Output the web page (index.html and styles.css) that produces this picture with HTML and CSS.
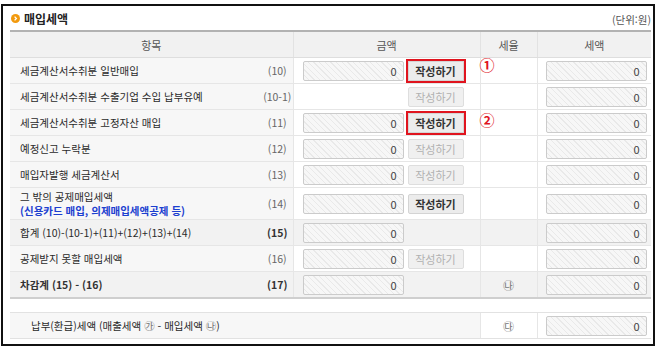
FILE: index.html
```html
<!DOCTYPE html>
<html lang="ko">
<head>
  <meta charset="UTF-8">
  <title>매입세액</title>
  <link rel="stylesheet" href="styles.css">
</head>
<body>
  <div class="panel">
    <div class="title-bar">
      <h2 class="title">
        <svg class="bullet" width="9" height="9" viewBox="0 0 9 9">
          <circle cx="4.5" cy="4.5" r="4.5" fill="#f29a0e"/>
          <path d="M3.6 2.6 L5.4 4.5 L3.6 6.4" stroke="#fff" stroke-width="1.3" fill="none"/>
        </svg>
        매입세액
      </h2>
      <span class="unit">(단위:원)</span>
    </div>

    <table class="tax-table">
      <colgroup>
        <col class="c-label"><col class="c-no"><col class="c-amount"><col class="c-rate"><col class="c-tax">
      </colgroup>
      <thead>
        <tr>
          <th colspan="2">항목</th>
          <th>금액</th>
          <th>세율</th>
          <th>세액</th>
        </tr>
      </thead>
      <tbody>
        <tr>
          <td class="label">세금계산서수취분 일반매입</td>
          <td class="no">(10)</td>
          <td class="amount">
            <div class="amount-box">
              <span class="field">0</span>
              <button class="write marked">작성하기</button>
            </div>
            <span class="mark mark-1">①</span>
          </td>
          <td class="rate"></td>
          <td class="tax"><span class="field">0</span></td>
        </tr>
        <tr>
          <td class="label">세금계산서수취분 수출기업 수입 납부유예</td>
          <td class="no">(10-1)</td>
          <td class="amount">
            <div class="amount-box">
              <button class="write off">작성하기</button>
            </div>
          </td>
          <td class="rate"></td>
          <td class="tax"><span class="field">0</span></td>
        </tr>
        <tr>
          <td class="label">세금계산서수취분 고정자산 매입</td>
          <td class="no">(11)</td>
          <td class="amount">
            <div class="amount-box">
              <span class="field">0</span>
              <button class="write marked">작성하기</button>
            </div>
            <span class="mark mark-2">②</span>
          </td>
          <td class="rate"></td>
          <td class="tax"><span class="field">0</span></td>
        </tr>
        <tr>
          <td class="label">예정신고 누락분</td>
          <td class="no">(12)</td>
          <td class="amount">
            <div class="amount-box">
              <span class="field">0</span>
              <button class="write off">작성하기</button>
            </div>
          </td>
          <td class="rate"></td>
          <td class="tax"><span class="field">0</span></td>
        </tr>
        <tr>
          <td class="label">매입자발행 세금계산서</td>
          <td class="no">(13)</td>
          <td class="amount">
            <div class="amount-box">
              <span class="field">0</span>
              <button class="write off">작성하기</button>
            </div>
          </td>
          <td class="rate"></td>
          <td class="tax"><span class="field">0</span></td>
        </tr>
        <tr class="tall">
          <td class="label">그 밖의 공제매입세액<br><span class="note">(신용카드 매입, 의제매입세액공제 등)</span></td>
          <td class="no">(14)</td>
          <td class="amount">
            <div class="amount-box">
              <span class="field">0</span>
              <button class="write">작성하기</button>
            </div>
          </td>
          <td class="rate"></td>
          <td class="tax"><span class="field">0</span></td>
        </tr>
        <tr class="sum">
          <td class="label">합계 (10)-(10-1)+(11)+(12)+(13)+(14)</td>
          <td class="no strong">(15)</td>
          <td class="amount">
            <div class="amount-box">
              <span class="field">0</span>
            </div>
          </td>
          <td class="rate"></td>
          <td class="tax"><span class="field">0</span></td>
        </tr>
        <tr>
          <td class="label">공제받지 못할 매입세액</td>
          <td class="no">(16)</td>
          <td class="amount">
            <div class="amount-box">
              <span class="field">0</span>
              <button class="write off">작성하기</button>
            </div>
          </td>
          <td class="rate"></td>
          <td class="tax"><span class="field">0</span></td>
        </tr>
        <tr class="sum last">
          <td class="label strong">차감계 (15) - (16)</td>
          <td class="no strong">(17)</td>
          <td class="amount">
            <div class="amount-box">
              <span class="field">0</span>
            </div>
          </td>
          <td class="rate">㉯</td>
          <td class="tax"><span class="field">0</span></td>
        </tr>
      </tbody>
    </table>

    <table class="tax-table total-table">
      <colgroup>
        <col class="c-label"><col class="c-no"><col class="c-amount"><col class="c-rate"><col class="c-tax">
      </colgroup>
      <tr>
        <td class="label total-label" colspan="3">납부(환급)세액 (매출세액 <span class="sym">㉮</span> - 매입세액 <span class="sym">㉯</span>)</td>
        <td class="rate">㉰</td>
        <td class="tax"><span class="field">0</span></td>
      </tr>
    </table>
  </div>
</body>
</html>
```

FILE: styles.css
```css
html, body {
  margin: 0;
  padding: 0;
  background-color: #fff;
  font-family: "Noto Sans CJK KR", "Noto Sans", sans-serif;
  color: #2a2a2a;
}

.panel {
  width: 641px;
  height: 338px;
  margin: 4px 0 0 1px;
  padding: 0 2px 0 7px;
  border: 2px solid #111;
}

.title-bar {
  height: 24px;
  display: flex;
  align-items: center;
  justify-content: space-between;
}

.title {
  margin: 0;
  display: flex;
  align-items: center;
  gap: 4px;
  font-size: 12px;
  font-weight: bold;
  color: #222;
  padding-left: 1px;
}

.bullet {
  display: block;
}

.unit {
  font-size: 10.5px;
  color: #555;
  padding-top: 2px;
}

.tax-table {
  width: 641px;
  table-layout: fixed;
  border-collapse: collapse;
  font-size: 10.5px;
}

.c-label { width: 252px; }
.c-no { width: 31px; }
.c-amount { width: 187px; }
.c-rate { width: 57px; }
.c-tax { width: 114px; }

.tax-table th {
  height: 25px;
  padding: 0;
  background-color: #f1f1f1;
  border-top: 2px solid #b2b2b2;
  border-bottom: 1px solid #dedede;
  font-weight: normal;
  font-size: 11px;
  color: #555;
}

.tax-table th + th {
  border-left: 1px solid #e2e2e2;
}

.tax-table td {
  height: 25px;
  padding: 0;
  border-bottom: 1px solid #e6e6e6;
  line-height: 14px;
}

.tax-table tr.tall td {
  height: 31px;
}

.label {
  padding-left: 10px !important;
  background-color: #f7f7f7;
  white-space: nowrap;
}

.note {
  color: #1c3fd0;
  font-weight: bold;
}

.no {
  text-align: center;
  background-color: #f7f7f7;
  color: #666;
  white-space: nowrap;
}

.strong {
  font-weight: bold;
  color: #333;
}

.amount {
  position: relative;
  padding-left: 9px !important;
  border-left: 1px solid #e6e6e6;
}

.amount-box {
  display: grid;
  grid-template-columns: 101px 56px;
  gap: 4px;
  align-items: center;
}

.field {
  display: block;
  box-sizing: border-box;
  width: 101px;
  height: 20px;
  padding-right: 6px;
  border: 1px solid #cbcbcb;
  border-radius: 2px;
  background-color: #f6f6f6;
  background-image: repeating-linear-gradient(45deg, #f7f7f7 0, #f7f7f7 3px, #e9e9e9 3px, #e9e9e9 4px);
  text-align: right;
  line-height: 18px;
  font-size: 11px;
  color: #444;
}

.write {
  grid-column: 2;
  height: 20px;
  padding: 0;
  border: 1px solid #d4d4d4;
  border-radius: 2px;
  background-color: #ececec;
  font-family: inherit;
  font-size: 11px;
  font-weight: bold;
  color: #333;
  cursor: pointer;
}

.write.off {
  background-color: #f0f0f0;
  border-color: #dedede;
  font-weight: normal;
  color: #b0b0b0;
}

.write.marked {
  border-radius: 0;
  outline: 2px solid #e0141e;
  outline-offset: 0;
}

.mark {
  position: absolute;
  right: -15px;
  font-size: 15px;
  font-weight: bold;
  line-height: 15px;
  color: #e0141e;
}

.mark-1 { top: -1px; }
.mark-2 { top: 2px; }

.rate {
  text-align: center;
  border-left: 1px solid #e6e6e6;
  color: #777;
  font-size: 11px;
}

.tax {
  padding-left: 8px !important;
  border-left: 1px solid #e6e6e6;
}

.sum td {
  background-color: #f2f2f2;
}

.last td {
  border-bottom: 2px solid #cfcfcf;
}

.total-table {
  margin-top: 13px;
}

.total-table td {
  border-top: 1px solid #e2e2e2;
  border-bottom: 1px solid #e2e2e2;
}

.total-label {
  padding-left: 21px !important;
}

.sym {
  color: #777;
}

.total-table .rate {
  background-color: #fff;
}
```
